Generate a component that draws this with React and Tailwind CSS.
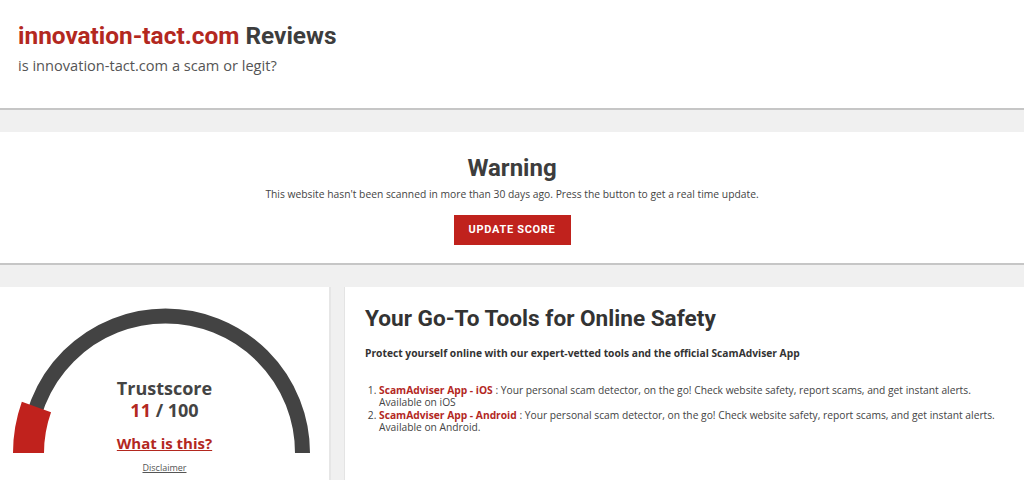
import React from "react";

function Gauge() {
  const cx = 165.5, cy = 453, r = 137;
  const a = (180 - 19.6) * Math.PI / 180;
  const ex = cx + r * Math.cos(a), ey = cy - r * Math.sin(a);
  return (
    <svg width="331" height="193" viewBox="0 287 331 193" className="absolute left-0 top-0">
      <path d={`M ${cx - r} ${cy} A ${r} ${r} 0 0 1 ${cx + r} ${cy}`} fill="none" stroke="#434343" strokeWidth="15" />
      <path d={`M ${cx - r} ${cy} A ${r} ${r} 0 0 1 ${ex} ${ey}`} fill="none" stroke="#c0221d" strokeWidth="31" />
    </svg>
  );
}

export default function App() {
  const body = { fontFamily: '"Open Sans", "Liberation Sans", sans-serif' };
  const head = { fontFamily: 'Roboto, "Liberation Sans", sans-serif' };
  return (
    <div className="w-[1024px] h-[480px] overflow-hidden bg-[#f0f0f0] text-[#444]" style={body}>
      <header className="bg-white h-[110px] px-[18px] pt-[20px] border-b-2 border-[#c6c6c6]">
        <h1 className="text-[24.4px] font-bold leading-[32px]" style={head}>
          <span className="text-[#b3281f]">innovation-tact.com</span> <span className="text-[#3d3d3d]">Reviews</span>
        </h1>
        <p className="text-[14.6px] leading-[24px] text-[#555] mt-[1px]">is innovation-tact.com a scam or legit?</p>
      </header>
      <div className="h-[22px]" />
      <section className="bg-white h-[133px] border-b-2 border-[#c6c6c6] flex flex-col items-center pt-[20px]">
        <h2 className="text-[24px] font-bold leading-[32px] text-[#3d3d3d]" style={head}>Warning</h2>
        <p className="text-[10.3px] leading-[16px] text-[#444] mt-[2px]">This website hasn't been scanned in more than 30 days ago. Press the button to get a real time update.</p>
        <button className="mt-[13px] w-[117px] h-[30px] bg-[#c0221d] text-white text-[11px] font-bold tracking-[0.7px]" style={head}>UPDATE SCORE</button>
      </section>
      <div className="h-[22px]" />
      <div className="flex h-[193px]">
        <div className="relative w-[331px] bg-white border-r-2 border-[#e6e6e6]">
          <Gauge />
          <div className="absolute left-0 right-0 top-[90px] flex flex-col items-center">
            <div className="text-[18px] font-bold leading-[22px] text-[#444]">Trustscore</div>
            <div className="text-[18px] font-bold leading-[22px] text-[#444]"><span className="text-[#b3281f]">11</span> / 100</div>
            <a className="mt-[12px] text-[15px] font-bold leading-[20px] text-[#b3281f] underline">What is this?</a>
            <a className="mt-[9px] text-[9px] leading-[12px] text-[#555] underline">Disclaimer</a>
          </div>
        </div>
        <div className="w-[13px]" />
        <div className="flex-1 bg-white border-l border-[#e4e4e4] pl-[20px] pt-[18px]">
          <h2 className="text-[22.6px] font-bold leading-[28px] text-[#333]" style={head}>Your Go-To Tools for Online Safety</h2>
          <p className="mt-[12px] text-[10.25px] font-bold leading-[16px] text-[#333]">Protect yourself online with our expert-vetted tools and the official ScamAdviser App</p>
          <ol className="mt-[23px] pl-[14px] list-decimal text-[10.25px] leading-[12.3px] text-[#444] pr-[10px]">
            <li><span className="text-[#b3281f] font-bold">ScamAdviser App - iOS</span> : Your personal scam detector, on the go! Check website safety, report scams, and get instant alerts. Available on iOS</li>
            <li><span className="text-[#b3281f] font-bold">ScamAdviser App - Android</span> : Your personal scam detector, on the go! Check website safety, report scams, and get instant alerts. Available on Android.</li>
          </ol>
        </div>
      </div>
    </div>
  );
}
